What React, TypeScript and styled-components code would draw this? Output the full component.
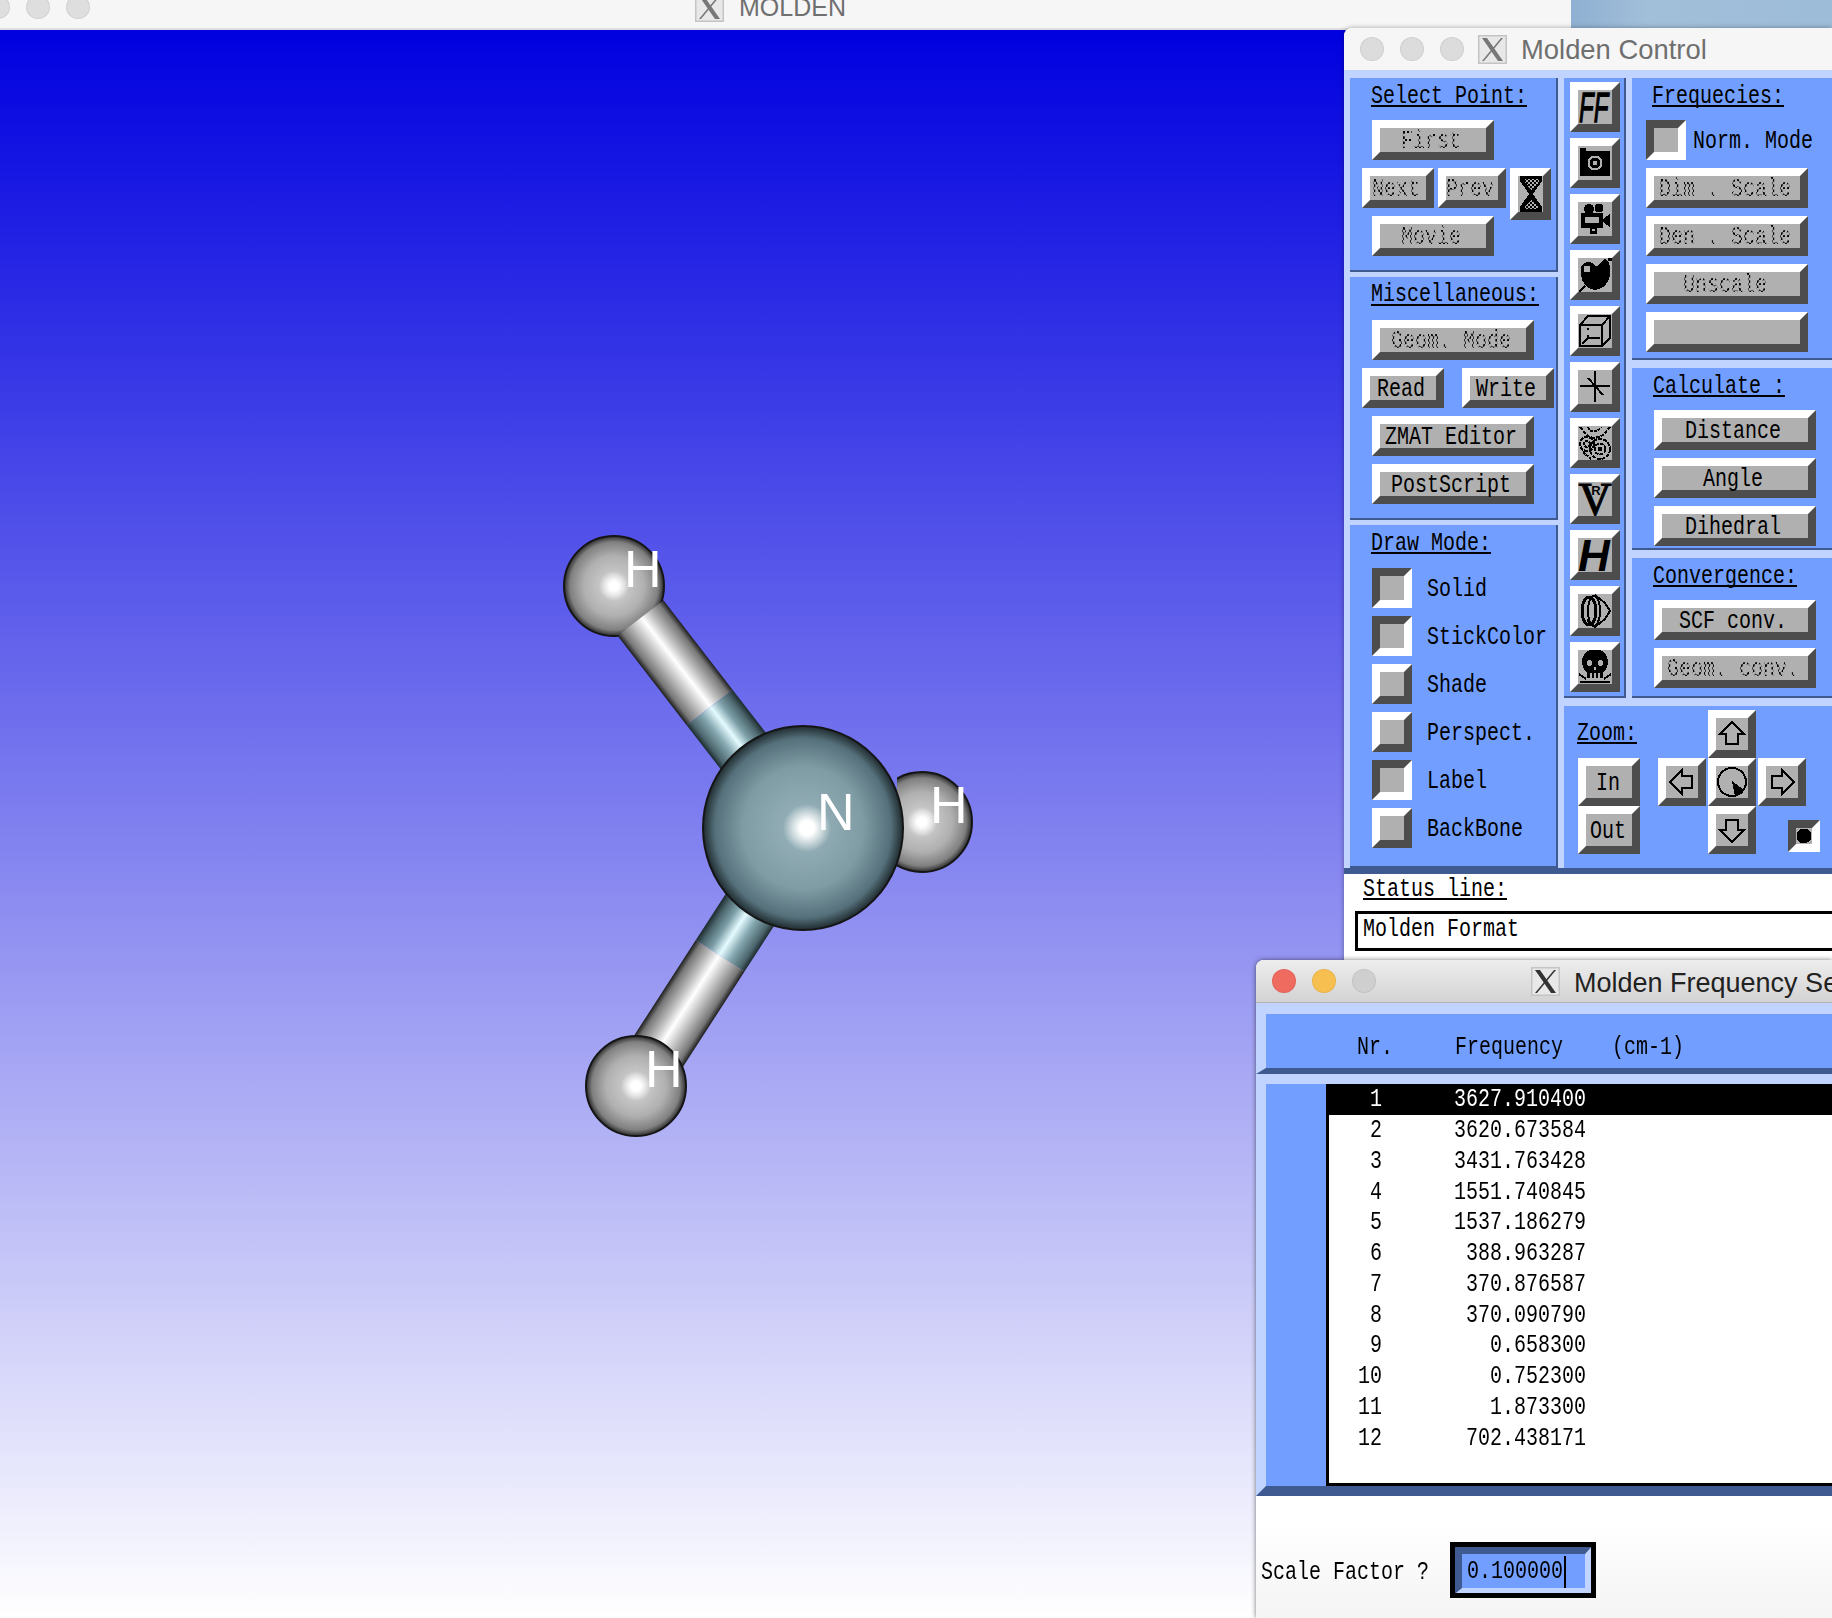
import React from "react";
import styled, { createGlobalStyle } from "styled-components";

const BLUE = "#729fff";
const LIGHT = "#c0d4ff";
const DARK = "#3f5a90";
const SHADE = "#4d4d4d";
const FACE = "#b0b0b0";

const Global = createGlobalStyle`
  html, body { margin: 0; padding: 0; background: #fff; }
  * { box-sizing: border-box; }
`;

const Desktop = styled.div`
  position: relative;
  width: 1832px;
  height: 1618px;
  overflow: hidden;
  font-family: "Liberation Sans", Arial, sans-serif;
`;

const MainWindow = styled.div`
  display: flex;
  flex-direction: column;
  height: 100%;
`;
const TopRow = styled.div`
  display: flex;
  height: 30px;
`;
const MainTitle = styled.div`
  width: 1571px;
  height: 30px;
  display: flex;
  align-items: center;
  padding: 0 0 14px 0;
  background: #f6f6f6;
  border-bottom: 2px solid #dedede;
  overflow: visible;
`;
const BlurredBackdrop = styled.div`
  flex: 1;
  height: 28px;
  background: linear-gradient(90deg, #8fb0d2, #a2bfd9 30%, #9dbcd8 100%);
`;
const Canvas = styled.div`
  flex: 1;
  background: linear-gradient(180deg, #0000e0 0%, #ffffff 100%);
`;
const MoleculeSvg = styled.svg`
  display: block;
`;

const Lights = styled.div<{ $left: number }>`
  display: flex;
  gap: 16px;
  margin-left: ${(p) => p.$left}px;
  flex: none;
`;
const Light = styled.span<{ $color: string }>`
  width: 24px;
  height: 24px;
  border-radius: 50%;
  background: ${(p) => p.$color};
  box-shadow: inset 0 0 0 1px rgba(0, 0, 0, 0.06);
`;
const LogoBox = styled.svg<{ $gap: number }>`
  flex: none;
  margin-left: ${(p) => p.$gap}px;
`;
const WindowName = styled.span<{ $color: string; $size: number; $gap: number; $drop?: number }>`
  margin-left: ${(p) => p.$gap}px;
  padding-top: ${(p) => p.$drop ?? 0}px;
  font-size: ${(p) => p.$size}px;
  color: ${(p) => p.$color};
  white-space: nowrap;
  line-height: 30px;
`;

const ControlWindow = styled.div`
  position: absolute;
  left: 1344px;
  top: 28px;
  width: 488px;
  height: 934px;
  display: flex;
  flex-direction: column;
  border-radius: 8px 0 0 0;
  box-shadow: 0 0 5px rgba(0, 0, 0, 0.35);
  background: #fff;
  overflow: hidden;
`;
const ControlTitle = styled.div`
  height: 42px;
  flex: none;
  display: flex;
  align-items: center;
  background: #f6f6f6;
`;
const ControlBody = styled.div`
  height: 804px;
  flex: none;
  display: flex;
  gap: 6px;
  padding: 8px 0 0 6px;
  background: ${LIGHT};
  border-bottom: 6px solid ${DARK};
`;
const LeftColumn = styled.div`
  width: 208px;
  flex: none;
  display: flex;
  flex-direction: column;
  gap: 5px;
`;
const RightArea = styled.div`
  width: 268px;
  flex: none;
  display: flex;
  flex-direction: column;
  gap: 8px;
`;
const TopSplit = styled.div`
  height: 620px;
  display: flex;
  gap: 6px;
`;
const Panel = styled.section<{ $h?: number; $x?: number; $gap?: number }>`
  height: ${(p) => (p.$h ? `${p.$h}px` : "auto")};
  background: ${BLUE};
  border-right: 2px solid ${DARK};
  border-bottom: 2px solid ${DARK};
  padding-left: ${(p) => p.$x ?? 0}px;
  display: flex;
  flex-direction: column;
  gap: ${(p) => p.$gap ?? 8}px;
`;
const FreqColumn = styled.div`
  width: 204px;
  flex: none;
  display: flex;
  flex-direction: column;
  gap: 8px;
`;
const IconColumn = styled.div`
  width: 62px;
  flex: none;
  display: flex;
  flex-direction: column;
  gap: 6px;
  padding: 4px 0 0 6px;
  background: ${BLUE};
  border-right: 2px solid ${DARK};
  border-bottom: 2px solid ${DARK};
`;
const HeadingRow = styled.div<{ $h?: number; $x?: number; $top?: number }>`
  height: ${(p) => (p.$h ?? 42) - 8}px;
  padding: ${(p) => p.$top ?? 3}px 0 0 ${(p) => p.$x ?? 22}px;
  flex: none;
`;
const Underlined = styled.div`
  display: inline-block;
  height: 26px;
  margin-left: -1px;
  border-bottom: 2px solid #000;
`;
const Glyphs = styled.span<{ $stipple?: boolean; $invert?: boolean; $dx?: number; $dy?: number }>`
  display: inline-block;
  font-family: "Liberation Mono", "DejaVu Sans Mono", monospace;
  font-size: 20px;
  line-height: 24px;
  white-space: pre;
  transform: translate(${(p) => p.$dx ?? 0}px, ${(p) => p.$dy ?? 0}px) scaleY(1.3);
  color: ${(p) => (p.$invert ? "#fff" : "#000")};
  ${(p) =>
    p.$stipple
      ? `color: transparent;
         background-image: repeating-conic-gradient(#000 0 25%, transparent 0 50%);
         background-size: 4px 4px;
         -webkit-background-clip: text;
         background-clip: text;`
      : ""}
`;
const Bevel = styled.button<{ $w: number; $h?: number; $down?: boolean }>`
  width: ${(p) => p.$w}px;
  height: ${(p) => p.$h ?? 40}px;
  flex: none;
  padding: 0;
  margin: 0;
  display: flex;
  align-items: center;
  justify-content: center;
  background: ${FACE};
  border-style: solid;
  border-width: 8px;
  border-color: ${(p) =>
    p.$down ? `${SHADE} #fff #fff ${SHADE}` : `#fff ${SHADE} ${SHADE} #fff`};
  overflow: visible;
`;
const ButtonRow = styled.div<{ $x?: number; $gap?: number; $h?: number }>`
  display: flex;
  align-items: flex-start;
  height: ${(p) => p.$h ?? 40}px;
  gap: ${(p) => p.$gap ?? 4}px;
  margin-left: ${(p) => p.$x ?? 0}px;
  flex: none;
`;
const CheckLabel = styled.div<{ $gap?: number }>`
  margin-left: ${(p) => p.$gap ?? 15}px;
  height: 40px;
  display: flex;
  align-items: center;
`;
const ZoomPanel = styled.section`
  height: 162px;
  display: flex;
  padding: 4px 0 0 14px;
  background: ${BLUE};
`;
const ZoomLeft = styled.div`
  width: 62px;
  flex: none;
  display: flex;
  flex-direction: column;
`;
const ZoomHeading = styled.div`
  height: 48px;
  padding-top: 8px;
`;
const ArrowPad = styled.div`
  margin-left: 18px;
  display: grid;
  grid-template-columns: 48px 48px 48px;
  grid-template-rows: 48px 48px 48px;
  column-gap: 2px;
`;
const PadCell = styled.div<{ $col: number; $row: number }>`
  grid-column: ${(p) => p.$col};
  grid-row: ${(p) => p.$row};
`;
const TinyToggle = styled.div`
  grid-column: 3;
  grid-row: 3;
  justify-self: end;
  align-self: end;
  margin: 0 -14px 2px 0;
`;
const StatusArea = styled.div`
  flex: 1;
  background: #fff;
  padding-left: 11px;
`;
const StatusHeading = styled.div`
  padding-left: 9px;
  height: 37px;
`;
const StatusInput = styled.div`
  width: 520px;
  height: 40px;
  border: 3px solid #000;
  padding-left: 6px;
  display: flex;
  align-items: center;
`;

const FreqWindow = styled.div`
  position: absolute;
  left: 1256px;
  top: 960px;
  width: 576px;
  height: 658px;
  display: flex;
  flex-direction: column;
  border-radius: 8px 0 0 0;
  box-shadow: 0 0 5px rgba(0, 0, 0, 0.55);
  background: linear-gradient(180deg, #fff 85%, #f4f4f4 100%);
  overflow: hidden;
`;
const FreqTitle = styled.div`
  height: 43px;
  flex: none;
  display: flex;
  align-items: center;
  background: linear-gradient(180deg, #ededed, #d3d3d3);
  border-bottom: 1px solid #b4b4b4;
`;
const FreqUpper = styled.div`
  flex: none;
  height: 71px;
  padding-top: 11px;
  background: ${LIGHT};
  border-left: 10px solid ${LIGHT};
  border-bottom: 6px solid ${DARK};
`;
const FreqHeader = styled.div`
  height: 54px;
  background: ${BLUE};
  display: grid;
  grid-template-columns: 98px 157px auto;
  align-items: center;
  padding: 11px 0 0 91px;
`;
const FreqLower = styled.div`
  flex: none;
  height: 422px;
  padding-top: 10px;
  display: flex;
  background: ${LIGHT};
  border-left: 10px solid ${LIGHT};
  border-bottom: 10px solid ${DARK};
`;
const FreqGutter = styled.div`
  width: 60px;
  flex: none;
  background: ${BLUE};
`;
const FreqList = styled.div`
  flex: 1;
  background: #fff;
  border-left: 3px solid #000;
  border-bottom: 3px solid #000;
`;
const FreqRow = styled.div<{ $active?: boolean }>`
  height: 30.75px;
  display: grid;
  grid-template-columns: 53px 204px;
  align-items: center;
  background: ${(p) => (p.$active ? "#000" : "transparent")};
`;
const RightCell = styled.div`
  text-align: right;
`;
const ScaleRow = styled.div`
  margin-top: 46px;
  display: flex;
  align-items: center;
  height: 56px;
  padding-left: 5px;
`;
const ScaleLabel = styled.div`
  width: 189px;
  padding-top: 4px;
`;
const ScaleField = styled.div`
  position: relative;
  width: 146px;
  height: 56px;
  background: ${BLUE};
  border-style: solid;
  border-width: 12px 11px 10px 12px;
  border-color: ${DARK} ${LIGHT} ${LIGHT} ${DARK};
  outline: 5px solid #000;
  outline-offset: -5px;
  padding-left: 5px;
  display: flex;
  align-items: center;
`;
const Caret = styled.span`
  position: absolute;
  left: 102px;
  top: 2px;
  width: 2px;
  height: 32px;
  background: #000;
`;

function XLogo({ gap, dark }: { gap: number; dark?: boolean }) {
  const c = dark ? "#333" : "#777";
  return (
    <LogoBox $gap={gap} width="29" height="29" viewBox="0 0 29 29">
      <rect x="0.5" y="0.5" width="28" height="28" fill="#e8e8e8" stroke="#c4c4c4" strokeWidth="2" />
      <path d="M4 3 L9 3 L25 26 L20 26 Z" fill={c} />
      <path d="M23 3 L25 3 L6 26 L4 26 Z" fill={c} />
    </LogoBox>
  );
}

const ink = { fill: "#000" };
const lines = { fill: "none", stroke: "#000", strokeWidth: 2 };
const textFont = "Liberation Sans, Arial, sans-serif";
const serifFont = "Liberation Serif, Times New Roman, serif";

const icons: React.ReactNode[] = [
  <text key="ff" transform="translate(1 32) scale(1 1.8)" fontFamily={textFont} fontStyle="italic" fontSize="24" fill="#000" stroke="#000" strokeWidth="0.7">FF</text>,
  <g key="cam">
    <path d="M2 2 H8 V5 H32 V30 H2 Z" {...ink} />
    <circle cx="17" cy="17" r="6.5" fill="none" stroke={FACE} strokeWidth="2" />
    <circle cx="17" cy="17" r="2.5" fill={FACE} />
  </g>,
  <g key="movie">
    <circle cx="11" cy="7" r="5" {...ink} />
    <circle cx="21" cy="6" r="4.5" {...ink} />
    <rect x="3" y="11" width="22" height="15" {...ink} />
    <rect x="7" y="15" width="14" height="6" fill={FACE} />
    <path d="M25 17 L32 12 V25 L25 20 Z" {...ink} />
    <rect x="12" y="26" width="7" height="6" {...ink} />
    <rect x="14" y="27" width="3" height="2" fill={FACE} />
  </g>,
  <g key="palette">
    <path d="M3 8 C7 2 14 3 18 8 C20 9 23 3 27 1 C32 3 33 10 32 17 C31 26 24 32 16 32 C9 31 4 25 3 17 Z" {...ink} />
    <circle cx="9" cy="11" r="3.5" fill={FACE} />
    <rect x="30" y="0" width="4" height="3" {...ink} />
    <path d="M1 34 L7 28" {...lines} />
  </g>,
  <g key="cube">
    <path d="M2 11 L10 2 H32 V24 L24 32 H2 Z" {...lines} />
    <path d="M2 11 H24 V32 M24 11 L32 2" {...lines} />
    <path d="M10 10 V10 M10 14 V16 M10 21 V24 M4 30 L10 24 H22" fill="none" stroke="#000" strokeWidth="2" />
  </g>,
  <g key="star">
    <path d="M2 16 H32 M17 1 V32" {...lines} />
    <path d="M10 8 L25 25" {...lines} />
  </g>,
  <g key="mesh" fill="none" stroke="#000" strokeWidth="2">
    <circle cx="22" cy="23" r="10" strokeDasharray="4 1" />
    <circle cx="22" cy="23" r="5.5" strokeDasharray="4 1" />
    <circle cx="22" cy="23" r="1.5" />
    <circle cx="9" cy="18" r="7" strokeDasharray="4 1" />
    <circle cx="9" cy="18" r="3" strokeDasharray="3 1" />
    <path d="M2 1 L8 8 C12 13 20 13 26 8 L32 1" strokeDasharray="4 1" />
    <path d="M10 1 C12 7 20 7 23 1" strokeDasharray="3 1" />
    <path d="M5 26 L13 33" strokeDasharray="3 1" />
  </g>,
  <g key="vr">
    <text x="17" y="33" textAnchor="middle" fontFamily={serifFont} fontSize="46" fill="#000" stroke="#000" strokeWidth="1">V</text>
    <text x="18" y="13" textAnchor="middle" fontFamily={textFont} fontWeight="700" fontSize="13" fill="#000">R</text>
  </g>,
  <text key="h" x="0" y="33" fontFamily={textFont} fontStyle="italic" fontWeight="700" fontSize="44" fill="#000">H</text>,
  <g key="rings" fill="none" stroke="#000">
    <ellipse cx="11" cy="17" rx="7" ry="14" strokeWidth="3" />
    <ellipse cx="16" cy="17" rx="6" ry="15" strokeWidth="2" />
    <path d="M17 1 L27 9 L32 17 L27 25 L17 33 L9 26" strokeWidth="2" />
  </g>,
  <g key="skull">
    <circle cx="17" cy="12" r="13" {...ink} />
    <rect x="9" y="20" width="16" height="8" {...ink} />
    <circle cx="11.5" cy="13" r="3" fill={FACE} />
    <circle cx="22.5" cy="13" r="3" fill={FACE} />
    <rect x="16" y="17" width="2" height="3" fill={FACE} />
    <path d="M13 23 V28 M17 23 V28 M21 23 V28" fill="none" stroke={FACE} strokeWidth="1.5" />
    <path d="M1 24 L8 29 M33 24 L26 29 M2 32 H32" {...lines} />
  </g>,
];

function IconButton({ children }: { children: React.ReactNode }) {
  return (
    <Bevel $w={50} $h={50}>
      <svg width="34" height="34" viewBox="0 0 34 34" shapeRendering="crispEdges">
        {children}
      </svg>
    </Bevel>
  );
}

function Arrow({ turn }: { turn: number }) {
  return (
    <Bevel $w={48} $h={48}>
      <svg width="32" height="32" viewBox="0 0 32 32" shapeRendering="crispEdges">
        <g transform={`rotate(${turn} 16 16)`}>
          <path d="M16 4 L28 16 L22 16 L22 26 L10 26 L10 16 L4 16 Z" fill="none" stroke="#000" strokeWidth="2" />
        </g>
      </svg>
    </Bevel>
  );
}

function Hourglass() {
  return (
    <svg width="25" height="36" viewBox="0 0 25 36" shapeRendering="crispEdges">
      <defs>
        <pattern id="dither" width="4" height="4" patternUnits="userSpaceOnUse">
          <rect width="4" height="4" fill="#000" />
          <rect x="0" y="0" width="2" height="2" fill={FACE} />
          <rect x="2" y="2" width="2" height="2" fill={FACE} />
        </pattern>
      </defs>
      <path d="M2 0 H24 V5 L15 18 L24 31 V36 H2 V31 L11 18 L2 5 Z" fill="#000" />
      <path d="M7 3 H21 V6 L14 14 L13 14 L7 6 Z" fill="url(#dither)" />
      <path d="M13 24 H14 L20 31 V33 H7 V31 Z" fill="url(#dither)" />
    </svg>
  );
}

function Button({ w, children, faint }: { w: number; children?: string; faint?: boolean }) {
  return (
    <Bevel $w={w}>
      {children ? <Glyphs $stipple={faint} $dx={-2} $dy={1.5}>{children}</Glyphs> : null}
    </Bevel>
  );
}

function Heading({ children, h, x }: { children: string; h?: number; x?: number }) {
  return (
    <HeadingRow $h={h} $x={x}>
      <Underlined>
        <Glyphs $dy={3}>{children}</Glyphs>
      </Underlined>
    </HeadingRow>
  );
}

function Check({ label, down, gap }: { label: string; down?: boolean; gap?: number }) {
  return (
    <ButtonRow $x={22} $gap={0}>
      <Bevel $w={40} $down={down} />
      <CheckLabel $gap={gap}>
        <Glyphs $dy={1}>{label}</Glyphs>
      </CheckLabel>
    </ButtonRow>
  );
}

function Sphere({ cx, cy, r, id, glint }: { cx: number; cy: number; r: number; id: string; glint: number }) {
  return (
    <>
      <circle cx={cx} cy={cy} r={r} fill={`url(#${id})`} stroke="#151515" strokeWidth="2" />
      <circle cx={cx + (r > 60 ? 4 : 0)} cy={cy} r={r * glint} fill="url(#glint)" />
    </>
  );
}

function Molecule() {
  return (
    <MoleculeSvg width="1344" height="1588" viewBox="0 30 1344 1588">
      <defs>
        <linearGradient id="bondGray" x1="0" y1="0" x2="0" y2="1">
          <stop offset="0" stopColor="#1d1d1d" />
          <stop offset="0.1" stopColor="#777" />
          <stop offset="0.3" stopColor="#bbb" />
          <stop offset="0.48" stopColor="#ffffff" />
          <stop offset="0.68" stopColor="#c0c0c0" />
          <stop offset="0.9" stopColor="#777" />
          <stop offset="1" stopColor="#1d1d1d" />
        </linearGradient>
        <linearGradient id="bondTeal" x1="0" y1="0" x2="0" y2="1">
          <stop offset="0" stopColor="#1c2a2e" />
          <stop offset="0.12" stopColor="#4c666d" />
          <stop offset="0.3" stopColor="#7d9fa8" />
          <stop offset="0.48" stopColor="#e4fbff" />
          <stop offset="0.68" stopColor="#86a8b1" />
          <stop offset="0.9" stopColor="#4c666d" />
          <stop offset="1" stopColor="#1c2a2e" />
        </linearGradient>
        <radialGradient id="hydrogen">
          <stop offset="0" stopColor="#d8d8d8" />
          <stop offset="0.6" stopColor="#b0b0b0" />
          <stop offset="0.88" stopColor="#808080" />
          <stop offset="1" stopColor="#2c2c2c" />
        </radialGradient>
        <radialGradient id="nitrogen">
          <stop offset="0" stopColor="#9ab5bd" />
          <stop offset="0.6" stopColor="#7f9ba4" />
          <stop offset="0.88" stopColor="#55707a" />
          <stop offset="1" stopColor="#1f2b2f" />
        </radialGradient>
        <radialGradient id="glint">
          <stop offset="0" stopColor="#ffffff" />
          <stop offset="0.3" stopColor="#ffffff" />
          <stop offset="1" stopColor="#ffffff" stopOpacity="0" />
        </radialGradient>
        <clipPath id="farHydrogen">
          <rect x="897" y="760" width="90" height="125" />
        </clipPath>
      </defs>
      <Sphere cx={614} cy={586} r={50} id="hydrogen" glint={0.3} />
      <g transform="translate(640.5 618) rotate(52.3)">
        <rect x="0" y="-29" width="113" height="58" fill="url(#bondGray)" />
        <rect x="113" y="-29" width="155" height="58" fill="url(#bondTeal)" />
      </g>
      <g transform="translate(636 1086) rotate(-57.1)">
        <rect x="0" y="-29" width="155" height="58" fill="url(#bondGray)" />
        <rect x="155" y="-29" width="152" height="58" fill="url(#bondTeal)" />
      </g>
      <Sphere cx={636} cy={1086} r={50} id="hydrogen" glint={0.3} />
      <g clipPath="url(#farHydrogen)">
        <Sphere cx={922} cy={822} r={50} id="hydrogen" glint={0.3} />
      </g>
      <ellipse cx={803} cy={828} rx={100} ry={102} fill="url(#nitrogen)" stroke="#151515" strokeWidth="2" />
      <circle cx={807} cy={828} r={24} fill="url(#glint)" />
      <g fontFamily={textFont} fontSize="52" fill="#fff">
        <text x="624" y="587">H</text>
        <text x="817" y="830">N</text>
        <text x="930" y="823">H</text>
        <text x="645" y="1087">H</text>
      </g>
    </MoleculeSvg>
  );
}

const frequencies = [
  "3627.910400", "3620.673584", "3431.763428", "1551.740845", "1537.186279", "388.963287",
  "370.876587", "370.090790", "0.658300", "0.752300", "1.873300", "702.438171",
];

export default function App() {
  return (
    <Desktop>
      <Global />
      <MainWindow>
        <TopRow>
          <MainTitle>
            <Lights $left={-14}>
              <Light $color="#dedede" />
              <Light $color="#dedede" />
              <Light $color="#dedede" />
            </Lights>
            <XLogo gap={605} />
            <WindowName $color="#6f6f6f" $size={25} $gap={15}>MOLDEN</WindowName>
          </MainTitle>
          <BlurredBackdrop />
        </TopRow>
        <Canvas>
          <Molecule />
        </Canvas>
      </MainWindow>

      <ControlWindow>
        <ControlTitle>
          <Lights $left={16}>
            <Light $color="#dcdcdc" />
            <Light $color="#dcdcdc" />
            <Light $color="#dcdcdc" />
          </Lights>
          <XLogo gap={14} />
          <WindowName $color="#6f6f6f" $size={27.4} $gap={14} $drop={2}>Molden Control</WindowName>
        </ControlTitle>
        <ControlBody>
          <LeftColumn>
            <Panel $h={194}>
              <Heading>Select Point:</Heading>
              <ButtonRow $x={22}><Button w={122} faint>First</Button></ButtonRow>
              <ButtonRow $x={12} $gap={4}>
                <Button w={72} faint>Next</Button>
                <Button w={68} faint>Prev</Button>
                <Bevel $w={41} $h={52}><Hourglass /></Bevel>
              </ButtonRow>
              <ButtonRow $x={22}><Button w={122} faint>Movie</Button></ButtonRow>
            </Panel>
            <Panel $h={243}>
              <Heading h={43}>Miscellaneous:</Heading>
              <ButtonRow $x={22}><Button w={162} faint>Geom. Mode</Button></ButtonRow>
              <ButtonRow $x={12} $gap={18}>
                <Button w={82}>Read</Button>
                <Button w={92}>Write</Button>
              </ButtonRow>
              <ButtonRow $x={22}><Button w={162}>ZMAT Editor</Button></ButtonRow>
              <ButtonRow $x={22}><Button w={162}>PostScript</Button></ButtonRow>
            </Panel>
            <Panel $h={343}>
              <Heading h={43}>Draw Mode:</Heading>
              <Check label="Solid" down />
              <Check label="StickColor" down />
              <Check label="Shade" />
              <Check label="Perspect." />
              <Check label="Label" down />
              <Check label="BackBone" />
            </Panel>
          </LeftColumn>
          <RightArea>
            <TopSplit>
              <IconColumn>
                {icons.map((icon, i) => (
                  <IconButton key={i}>{icon}</IconButton>
                ))}
              </IconColumn>
              <FreqColumn>
                <Panel $h={282} $x={14}>
                  <Heading x={7}>Frequecies:</Heading>
                  <ButtonRow>
                    <Bevel $w={40} $down />
                    <CheckLabel $gap={3}><Glyphs $dy={1}>Norm. Mode</Glyphs></CheckLabel>
                  </ButtonRow>
                  <ButtonRow><Button w={162} faint>Dim . Scale</Button></ButtonRow>
                  <ButtonRow><Button w={162} faint>Den . Scale</Button></ButtonRow>
                  <ButtonRow><Button w={162} faint>Unscale</Button></ButtonRow>
                  <ButtonRow><Button w={162} /></ButtonRow>
                </Panel>
                <Panel $h={182} $x={22}>
                  <Heading x={0}>Calculate :</Heading>
                  <ButtonRow><Button w={162}>Distance</Button></ButtonRow>
                  <ButtonRow><Button w={162}>Angle</Button></ButtonRow>
                  <ButtonRow><Button w={162}>Dihedral</Button></ButtonRow>
                </Panel>
                <Panel $h={140} $x={22}>
                  <Heading x={0}>Convergence:</Heading>
                  <ButtonRow><Button w={162}>SCF conv.</Button></ButtonRow>
                  <ButtonRow><Button w={162} faint>Geom. conv.</Button></ButtonRow>
                </Panel>
              </FreqColumn>
            </TopSplit>
            <ZoomPanel>
              <ZoomLeft>
                <ZoomHeading>
                  <Underlined><Glyphs $dy={3}>Zoom:</Glyphs></Underlined>
                </ZoomHeading>
                <Bevel $w={62} $h={48}><Glyphs $dx={-1} $dy={1}>In</Glyphs></Bevel>
                <Bevel $w={62} $h={48}><Glyphs $dx={-1} $dy={1}>Out</Glyphs></Bevel>
              </ZoomLeft>
              <ArrowPad>
                <PadCell $col={2} $row={1}><Arrow turn={0} /></PadCell>
                <PadCell $col={1} $row={2}><Arrow turn={270} /></PadCell>
                <PadCell $col={2} $row={2}>
                  <Bevel $w={48} $h={48}>
                    <svg width="32" height="32" viewBox="0 0 32 32" shapeRendering="crispEdges">
                      <circle cx="16" cy="16" r="14" fill="none" stroke="#000" strokeWidth="2" />
                      <path d="M16 15 L28 24 L19 30 Z" fill="#000" />
                    </svg>
                  </Bevel>
                </PadCell>
                <PadCell $col={3} $row={2}><Arrow turn={90} /></PadCell>
                <PadCell $col={2} $row={3}><Arrow turn={180} /></PadCell>
                <TinyToggle>
                  <Bevel $w={32} $h={32} $down>
                    <svg width="16" height="16" viewBox="0 0 16 16" shapeRendering="crispEdges">
                      <circle cx="8" cy="8" r="7.5" fill="#000" />
                    </svg>
                  </Bevel>
                </TinyToggle>
              </ArrowPad>
            </ZoomPanel>
          </RightArea>
        </ControlBody>
        <StatusArea>
          <StatusHeading>
            <Underlined><Glyphs $dy={3}>Status line:</Glyphs></Underlined>
          </StatusHeading>
          <StatusInput><Glyphs $dx={-1} $dy={-2}>Molden Format</Glyphs></StatusInput>
        </StatusArea>
      </ControlWindow>

      <FreqWindow>
        <FreqTitle>
          <Lights $left={16}>
            <Light $color="#ef6a5f" />
            <Light $color="#f6bf4f" />
            <Light $color="#cfcfcf" />
          </Lights>
          <XLogo gap={155} dark />
          <WindowName $color="#222" $size={27} $gap={14} $drop={3}>Molden Frequency Select</WindowName>
        </FreqTitle>
        <FreqUpper>
          <FreqHeader>
            <Glyphs>Nr.</Glyphs>
            <Glyphs>Frequency</Glyphs>
            <Glyphs>(cm-1)</Glyphs>
          </FreqHeader>
        </FreqUpper>
        <FreqLower>
          <FreqGutter />
          <FreqList>
            {frequencies.map((value, i) => (
              <FreqRow key={value} $active={i === 0}>
                <RightCell><Glyphs $invert={i === 0}>{i + 1}</Glyphs></RightCell>
                <RightCell><Glyphs $invert={i === 0}>{value}</Glyphs></RightCell>
              </FreqRow>
            ))}
          </FreqList>
        </FreqLower>
        <ScaleRow>
          <ScaleLabel><Glyphs>Scale Factor ?</Glyphs></ScaleLabel>
          <ScaleField>
            <Glyphs>0.100000</Glyphs>
            <Caret />
          </ScaleField>
        </ScaleRow>
      </FreqWindow>
    </Desktop>
  );
}
